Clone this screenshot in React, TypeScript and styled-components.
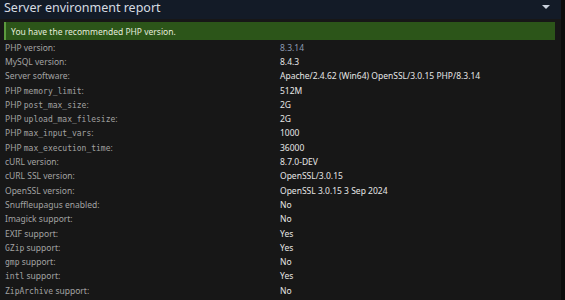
import React from "react";
import styled, { createGlobalStyle } from "styled-components";

const Global = createGlobalStyle`
  html, body { margin: 0; padding: 0; background: #0c0c0c; }
  body { font-family: "Noto Sans", "Open Sans", sans-serif; }
`;

const Panel = styled.div`
  width: 561px;
  height: 300px;
  background: #171717;
  overflow: hidden;
`;

const Header = styled.div`
  height: 19px;
  background: #131b27;
  display: flex;
  align-items: flex-start;
  justify-content: space-between;
  padding: 0 11px 0 4px;
  box-sizing: border-box;
`;

const Title = styled.h2`
  margin: 0;
  font-size: 12.5px;
  font-weight: 400;
  color: #d6dbe2;
  line-height: 16px;
`;

const Caret = styled.span`
  width: 0;
  height: 0;
  margin-top: 5px;
  border-left: 4px solid transparent;
  border-right: 4px solid transparent;
  border-top: 4px solid #c9d1dc;
`;

const Body = styled.div`
  padding: 3px 6px 0 4px;
`;

const Alert = styled.div`
  height: 18px;
  background: #2c5519;
  border-left: 2px solid #5c9a3e;
  box-sizing: border-box;
  display: flex;
  align-items: center;
  padding-left: 5px;
  font-size: 8.5px;
  color: #e4ecdc;
`;

const Table = styled.div`
  display: grid;
  grid-template-columns: 276px 1fr;
  grid-auto-rows: 14.3px;
  align-items: center;
`;

const Label = styled.div`
  padding-left: 1px;
  font-size: 8.5px;
  color: #a3a3a3;
  white-space: nowrap;
`;

const Value = styled.div<{ $accent?: boolean }>`
  font-size: 8.5px;
  color: ${(p) => (p.$accent ? "#8c9ab2" : "#e6e6e6")};
  white-space: nowrap;
`;

const Code = styled.code`
  font-family: "DejaVu Sans Mono", monospace;
  font-size: 8px;
`;

type Row = { pre?: string; code?: string; post?: string; value: string; accent?: boolean };

const rows: Row[] = [
  { pre: "PHP version:", value: "8.3.14", accent: true },
  { pre: "MySQL version:", value: "8.4.3" },
  { pre: "Server software:", value: "Apache/2.4.62 (Win64) OpenSSL/3.0.15 PHP/8.3.14" },
  { pre: "PHP ", code: "memory_limit", post: ":", value: "512M" },
  { pre: "PHP ", code: "post_max_size", post: ":", value: "2G" },
  { pre: "PHP ", code: "upload_max_filesize", post: ":", value: "2G" },
  { pre: "PHP ", code: "max_input_vars", post: ":", value: "1000" },
  { pre: "PHP ", code: "max_execution_time", post: ":", value: "36000" },
  { pre: "cURL version:", value: "8.7.0-DEV" },
  { pre: "cURL SSL version:", value: "OpenSSL/3.0.15" },
  { pre: "OpenSSL version:", value: "OpenSSL 3.0.15 3 Sep 2024" },
  { pre: "Snuffleupagus enabled:", value: "No" },
  { pre: "Imagick support:", value: "No" },
  { pre: "EXIF support:", value: "Yes" },
  { code: "GZip", post: " support:", value: "Yes" },
  { code: "gmp", post: " support:", value: "No" },
  { code: "intl", post: " support:", value: "Yes" },
  { code: "ZipArchive", post: " support:", value: "No" },
];

export default function App() {
  return (
    <>
      <Global />
      <Panel>
        <Header>
          <Title>Server environment report</Title>
          <Caret />
        </Header>
        <Body>
          <Alert>You have the recommended PHP version.</Alert>
          <Table>
            {rows.map((r, i) => (
              <React.Fragment key={i}>
                <Label>
                  {r.pre}
                  {r.code && <Code>{r.code}</Code>}
                  {r.post}
                </Label>
                <Value $accent={r.accent}>{r.value}</Value>
              </React.Fragment>
            ))}
          </Table>
        </Body>
      </Panel>
    </>
  );
}
